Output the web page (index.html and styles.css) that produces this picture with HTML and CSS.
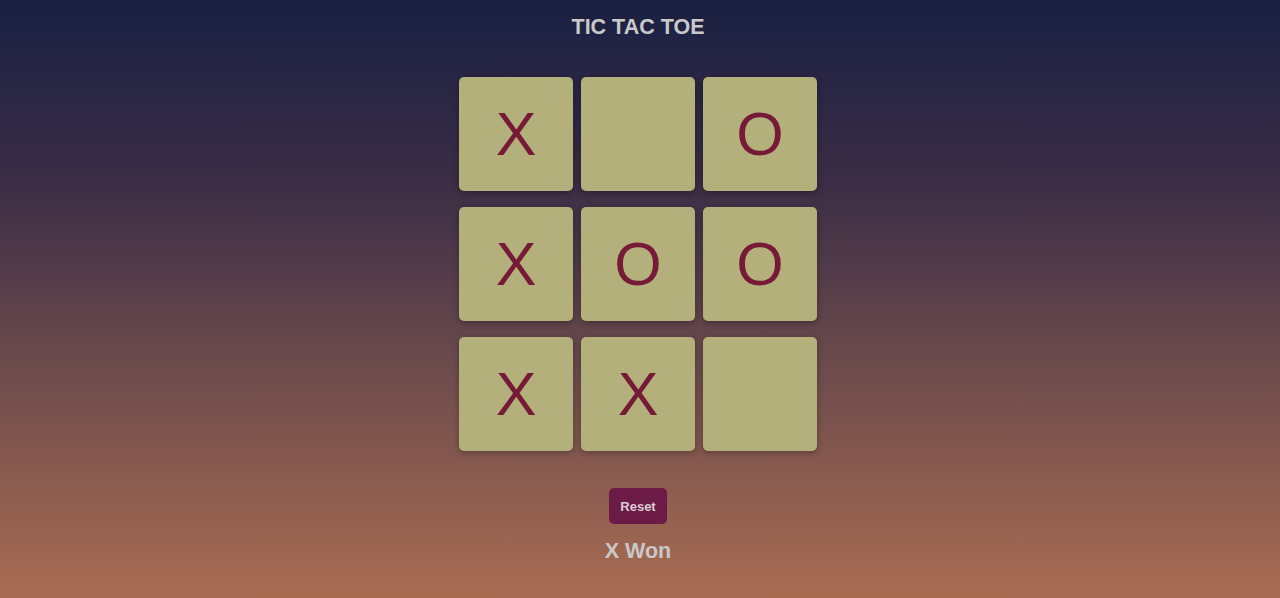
FILE: index.html
```html
<!DOCTYPE html>
<html>
<head>
<meta charset="utf-8">
<link rel="stylesheet" href="styles.css">
</head>
<body>
<div class="app">
  <h1 class="title">TIC TAC TOE</h1>
  <div class="board">
    <div class="cell">X</div>
    <div class="cell"></div>
    <div class="cell">O</div>
    <div class="cell">X</div>
    <div class="cell">O</div>
    <div class="cell">O</div>
    <div class="cell">X</div>
    <div class="cell">X</div>
    <div class="cell"></div>
  </div>
  <button class="reset">Reset</button>
  <div class="status">X Won</div>
</div>
</body>
</html>
```
FILE: styles.css
```css
html, body {
  margin: 0;
  padding: 0;
  height: 100%;
}
body {
  background: linear-gradient(to bottom, #192042 0%, #3a2d45 30%, #6a4a4c 60%, #a96c53 100%);
  font-family: "Liberation Sans", Arial, sans-serif;
}
.app {
  display: flex;
  flex-direction: column;
  align-items: center;
  height: 598px;
  padding-right: 4px;
}
.title {
  margin: 14px 0 0 0;
  font-size: 21.5px;
  line-height: 26px;
  font-weight: bold;
  color: #c9c9c9;
}
.board {
  margin-top: 37px;
  display: grid;
  grid-template-columns: repeat(3, 114px);
  grid-auto-rows: 114px;
  column-gap: 8px;
  row-gap: 16px;
}
.cell {
  background: #b3b07b;
  border-radius: 5px;
  box-shadow: 0 2px 6px rgba(0, 0, 0, 0.3);
  display: flex;
  align-items: center;
  justify-content: center;
  color: #761a37;
  font-size: 61px;
}
.reset {
  margin-top: 37px;
  width: 58px;
  height: 36px;
  border: none;
  border-radius: 5px;
  background: #6b1b45;
  color: #dccdd5;
  font-family: "Liberation Sans", Arial, sans-serif;
  font-weight: bold;
  font-size: 13px;
  padding: 0;
}
.status {
  margin-top: 15px;
  font-size: 21.5px;
  font-weight: bold;
  color: #c8c8c8;
}
```
